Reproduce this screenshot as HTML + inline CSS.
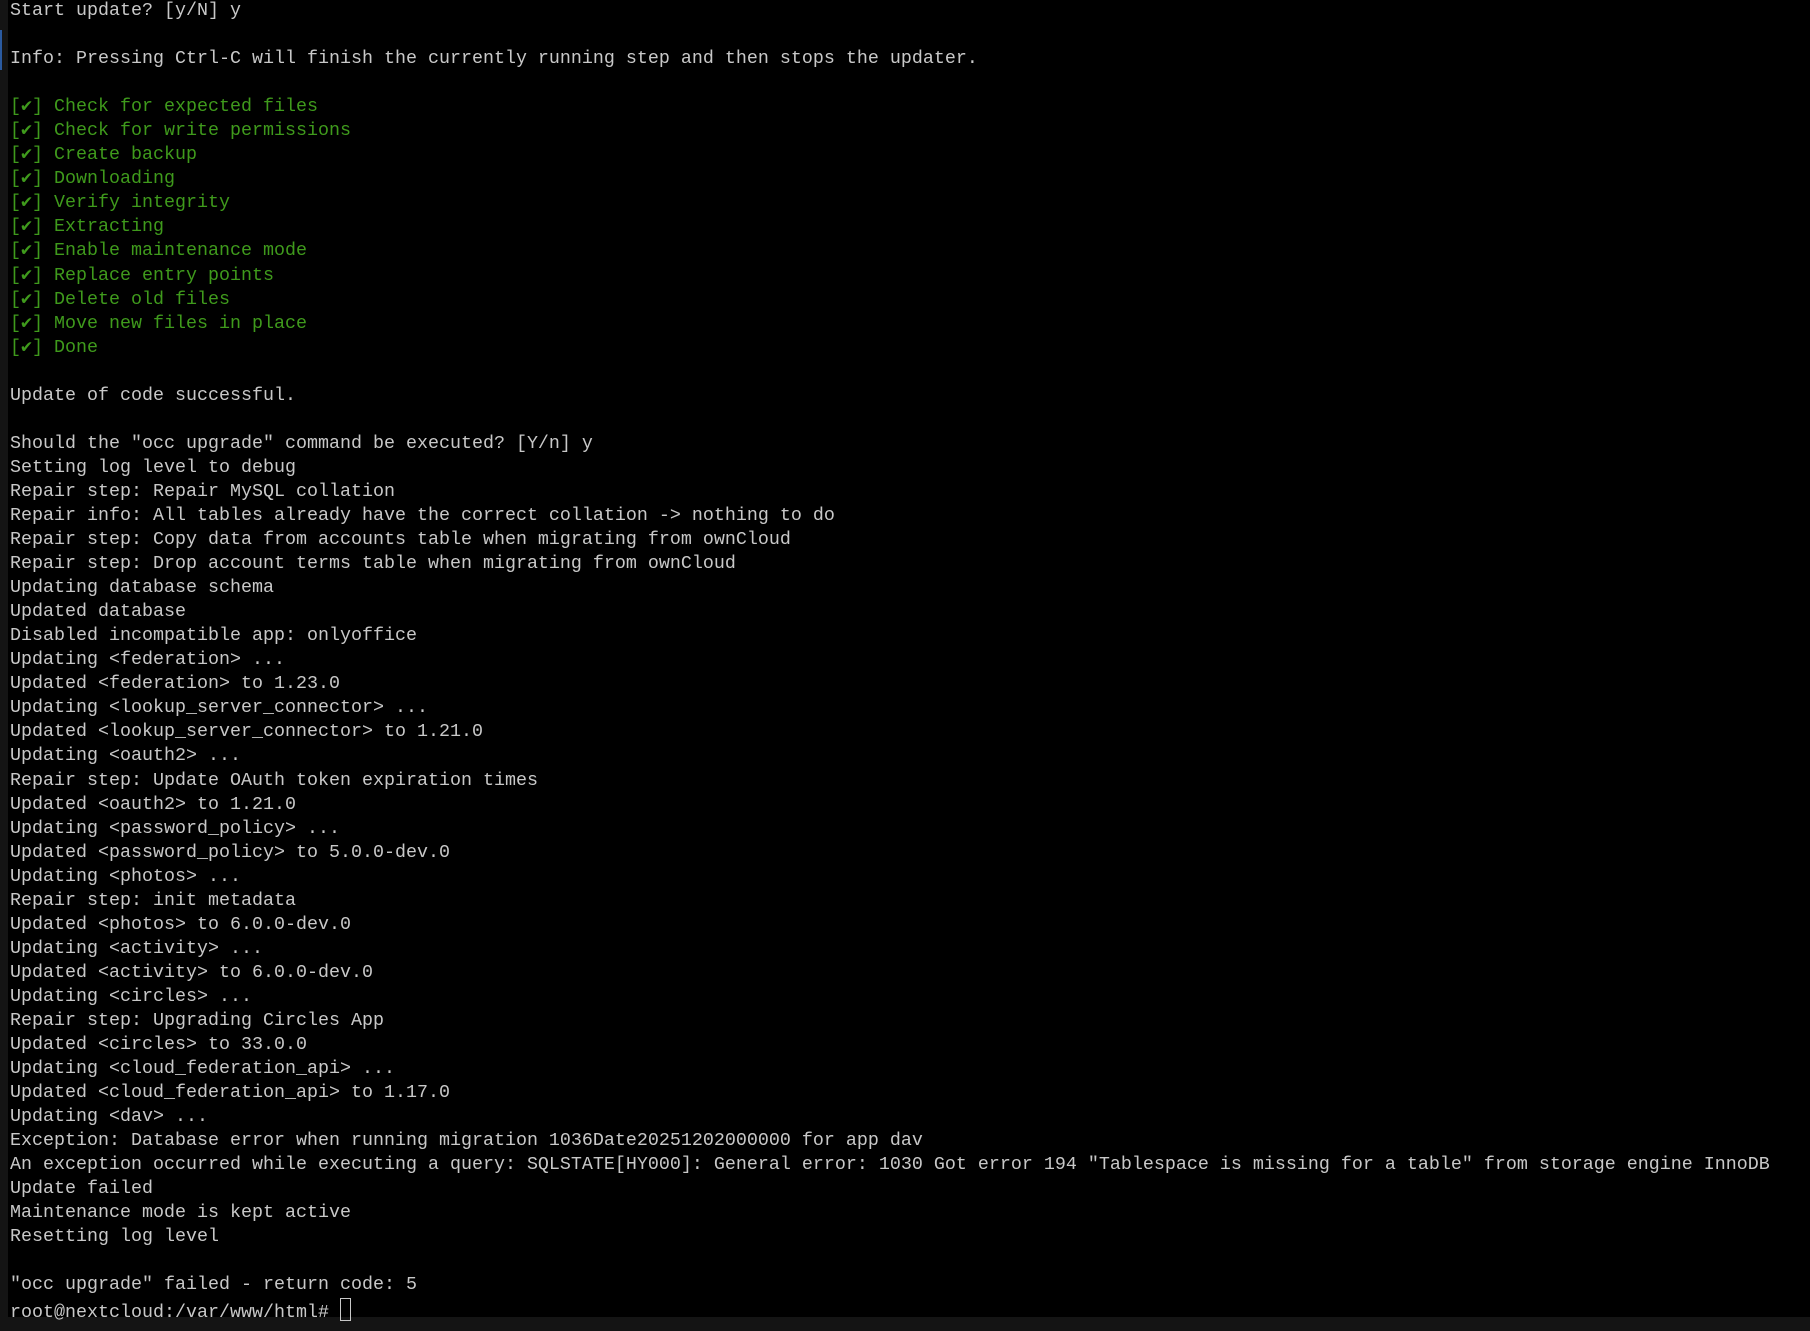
<!DOCTYPE html>
<html><head><meta charset="utf-8"><style>
html,body{margin:0;padding:0;background:#000;width:1810px;height:1331px;overflow:hidden}
.l{position:absolute;left:0;top:0;width:8px;height:1331px;background:#141414}
.lb{position:absolute;left:0;top:30px;width:2px;height:40px;background:#2a5aa0}
.b{position:absolute;left:0;top:1317px;width:1810px;height:14px;background:#141414}
pre{position:absolute;left:10px;top:-1px;margin:0;font-family:"Liberation Mono",monospace;font-size:18.33px;line-height:24.05px;color:#c8c8c8;white-space:pre}
.g{color:#3f9a1c}
.c{display:inline-block;width:9px;height:21px;border:1px solid #c8c8c8;vertical-align:-4px}
</style></head><body>
<div class="l"></div><div class="lb"></div><div class="b"></div>
<pre>Start update? [y/N] y

Info: Pressing Ctrl-C will finish the currently running step and then stops the updater.

<span class="g">[✔] Check for expected files
[✔] Check for write permissions
[✔] Create backup
[✔] Downloading
[✔] Verify integrity
[✔] Extracting
[✔] Enable maintenance mode
[✔] Replace entry points
[✔] Delete old files
[✔] Move new files in place
[✔] Done</span>

Update of code successful.

Should the "occ upgrade" command be executed? [Y/n] y
Setting log level to debug
Repair step: Repair MySQL collation
Repair info: All tables already have the correct collation -&gt; nothing to do
Repair step: Copy data from accounts table when migrating from ownCloud
Repair step: Drop account terms table when migrating from ownCloud
Updating database schema
Updated database
Disabled incompatible app: onlyoffice
Updating &lt;federation&gt; ...
Updated &lt;federation&gt; to 1.23.0
Updating &lt;lookup_server_connector&gt; ...
Updated &lt;lookup_server_connector&gt; to 1.21.0
Updating &lt;oauth2&gt; ...
Repair step: Update OAuth token expiration times
Updated &lt;oauth2&gt; to 1.21.0
Updating &lt;password_policy&gt; ...
Updated &lt;password_policy&gt; to 5.0.0-dev.0
Updating &lt;photos&gt; ...
Repair step: init metadata
Updated &lt;photos&gt; to 6.0.0-dev.0
Updating &lt;activity&gt; ...
Updated &lt;activity&gt; to 6.0.0-dev.0
Updating &lt;circles&gt; ...
Repair step: Upgrading Circles App
Updated &lt;circles&gt; to 33.0.0
Updating &lt;cloud_federation_api&gt; ...
Updated &lt;cloud_federation_api&gt; to 1.17.0
Updating &lt;dav&gt; ...
Exception: Database error when running migration 1036Date20251202000000 for app dav
An exception occurred while executing a query: SQLSTATE[HY000]: General error: 1030 Got error 194 "Tablespace is missing for a table" from storage engine InnoDB
Update failed
Maintenance mode is kept active
Resetting log level

"occ upgrade" failed - return code: 5
root@nextcloud:/var/www/html# <span class="c"></span></pre>
</body></html>
